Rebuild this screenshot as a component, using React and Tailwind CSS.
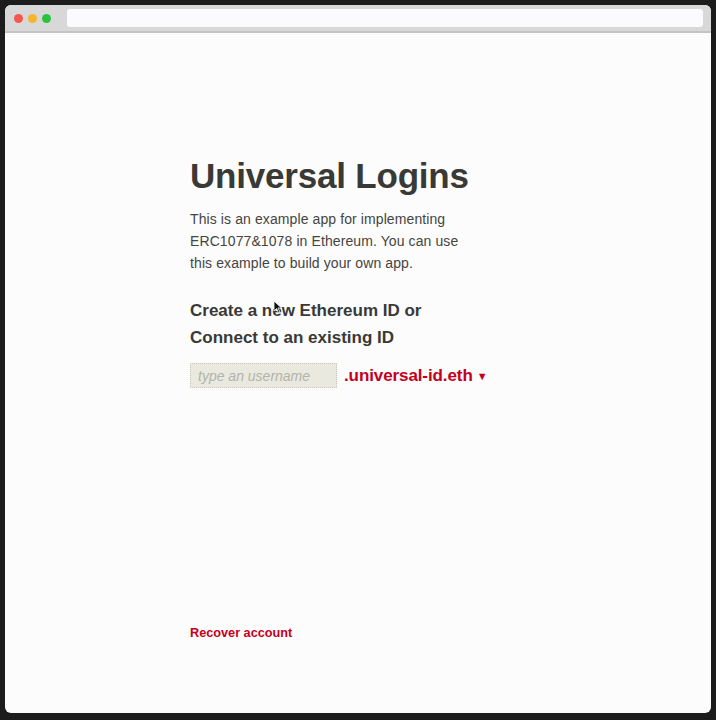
export default function App() {
  return (
    <div className="w-[716px] h-[720px] bg-[#1c1c1c] p-[5px] pb-[7px] relative" style={{ fontFamily: '"Liberation Sans", Arial, sans-serif' }}>
      <div className="w-full h-full rounded-[6px] overflow-hidden bg-[#fcfcfd] flex flex-col">
        <div className="h-[28px] bg-[#d8d8d8] border-b-2 border-[#c4c4c4] flex items-center pl-[9px] pr-[8px] gap-[5px] shrink-0">
          <span className="w-[9px] h-[9px] rounded-full bg-[#f5564f]" />
          <span className="w-[9px] h-[9px] rounded-full bg-[#f5b52c]" />
          <span className="w-[9px] h-[9px] rounded-full bg-[#2ac33d]" />
          <div className="ml-[11px] flex-1 h-[18px] bg-[#fbfbfd] rounded-[3px]" />
        </div>
        <div className="flex-1 flex flex-col pl-[185px] pt-[121px] text-[#393935]">
          <h1 className="text-[35px] leading-[44px] font-bold tracking-[-0.2px]">Universal Logins</h1>
          <p className="mt-[10px] text-[14px] leading-[22px] text-[#45453f] tracking-[0.1px]">
            This is an example app for implementing<br />ERC1077&amp;1078 in Ethereum. You can use<br />this example to build your own app.
          </p>
          <h2 className="mt-[23px] text-[17px] leading-[27px] font-bold">
            Create a new Ethereum ID or<br />Connect to an existing ID
          </h2>
          <div className="mt-[12px] flex items-center gap-[7px]">
            <input
              placeholder="type an username"
              className="w-[147px] h-[25px] bg-[#e9e9df] border border-dotted border-[#c8c8bc] px-[7px] text-[14px] italic placeholder:text-[#b3b3aa] outline-none"
            />
            <span className="text-[17px] font-bold text-[#c4001c] tracking-[-0.1px]">.universal-id.eth</span>
            <span className="text-[11px] text-[#c4001c] ml-[-3px] mt-[1px]">▼</span>
          </div>
          <div className="mt-[235px] text-[12.7px] font-bold text-[#c4001c]">Recover account</div>
        </div>
      </div>
      <svg className="absolute left-[273px] top-[300px]" width="10" height="14" viewBox="0 0 10 14">
        <path d="M1 1 L1 11 L3.5 8.5 L5.5 13 L7 12.3 L5 8 L8.5 8 Z" fill="#111" stroke="#fff" strokeWidth="0.8" />
      </svg>
    </div>
  );
}
